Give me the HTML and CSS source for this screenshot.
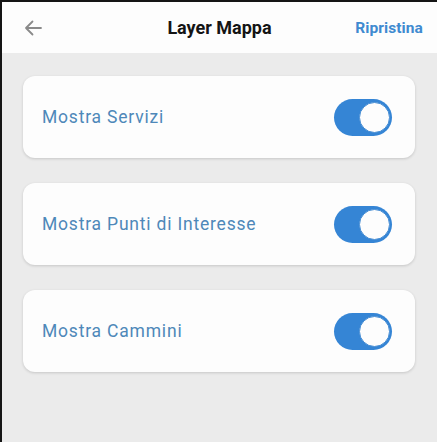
FILE: index.html
```html
<!DOCTYPE html>
<html lang="it">
<head>
<meta charset="utf-8">
<title>Layer Mappa</title>
<link rel="stylesheet" href="styles.css">
</head>
<body>
<div id="screen">

<div id="top_bar">
  <span class="back_btn">
    <svg width="20" height="20" viewBox="0 0 20 20"><path d="M18 10H3M9.5 3.5L3 10l6.5 6.5" fill="none" stroke="#8a8a8a" stroke-width="1.8" stroke-linecap="round" stroke-linejoin="round"/></svg>
  </span>
  <span class="bar_title">Layer Mappa</span>
  <span class="bar_action">Ripristina</span>
</div><!--top_bar end-->

<div id="layer_list">
  <div class="layer_card">
    <span class="layer_name">Mostra Servizi</span>
    <span class="switch_on"><span class="switch_knob"></span></span>
  </div>
  <div class="layer_card">
    <span class="layer_name">Mostra Punti di Interesse</span>
    <span class="switch_on"><span class="switch_knob"></span></span>
  </div>
  <div class="layer_card">
    <span class="layer_name">Mostra Cammini</span>
    <span class="switch_on"><span class="switch_knob"></span></span>
  </div>
</div><!--layer_list end-->

</div><!--screen end-->
</body>
</html>
```

FILE: styles.css
```css
html, body{
	margin:0;
	padding:0;
	height:100%;
}
body{
	background-color:#ebebeb;
	font-family:Roboto, "Liberation Sans", sans-serif;
}
#screen{
	min-height:100%;
	box-sizing:border-box;
	border-top:2px solid #151515;
	border-left:2px solid #151515;
	background-color:#ebebeb;
}
#top_bar{
	height:51px;
	background-color:#fdfdfd;
	display:grid;
	grid-template-columns:1fr auto 1fr;
	align-items:center;
	padding:0 14px;
}
.back_btn{
	display:flex;
	margin-left:7px;
}
.bar_title{
	font-size:18px;
	font-weight:700;
	color:#141414;
}
.bar_action{
	justify-self:end;
	font-size:15.5px;
	font-weight:700;
	color:#3f8ad0;
	letter-spacing:0.1px;
}
#layer_list{
	display:flex;
	flex-direction:column;
	gap:25px;
	padding:23px 22px 0 21px;
}
.layer_card{
	height:82px;
	background-color:#fdfdfd;
	border-radius:12px;
	box-shadow:0 1px 3px rgba(0,0,0,0.16);
	display:flex;
	align-items:center;
	justify-content:space-between;
	padding:0 23px 0 19px;
}
.layer_name{
	font-size:17.5px;
	color:#4e88b9;
	letter-spacing:0.8px;
	margin-top:-1px;
}
.switch_on{
	width:58px;
	height:37px;
	border-radius:19px;
	background-color:#3585d5;
	display:flex;
	align-items:center;
	justify-content:flex-end;
	padding-right:2px;
	box-sizing:border-box;
}
.switch_knob{
	width:31px;
	height:31px;
	border-radius:50%;
	background-color:#fdfdfd;
	border:1px solid #4a8fd4;
	box-sizing:border-box;
}
```
